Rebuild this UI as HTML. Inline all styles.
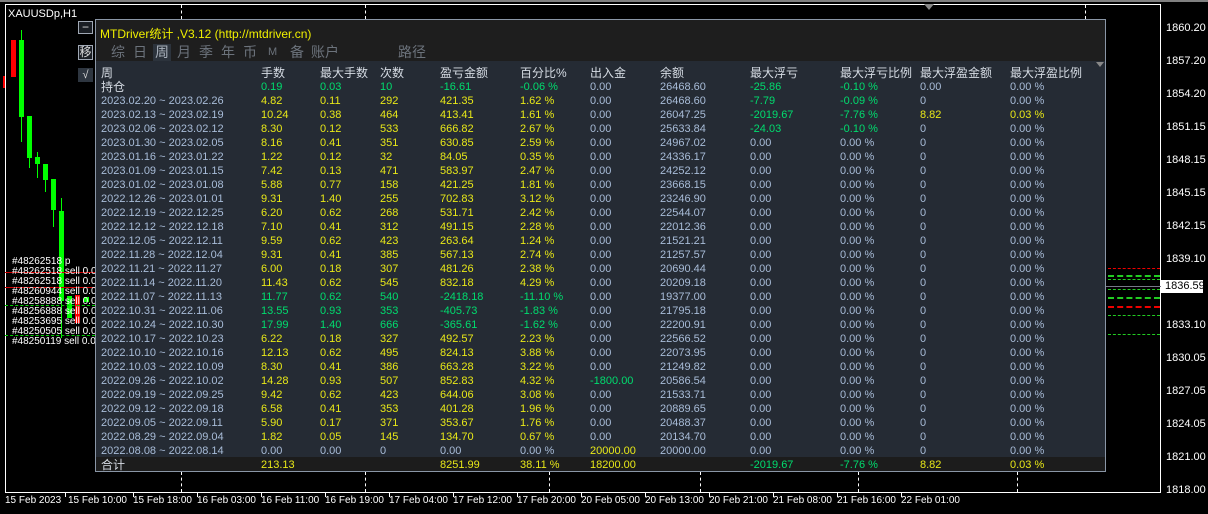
<!DOCTYPE html>
<html><head><meta charset="utf-8"><style>
*{margin:0;padding:0;box-sizing:border-box}
body{width:1208px;height:514px;background:#000;position:relative;overflow:hidden;font-family:"Liberation Sans","Noto Sans CJK SC",sans-serif;font-size:11px;color:#fff}
.a{position:absolute;white-space:nowrap}
.r{position:absolute;left:0;width:1010px;height:14px;line-height:14px;font-size:11px}
.r span{position:absolute;top:0}
.c0{left:5px}.c1{left:165px}.c2{left:224px}.c3{left:284px}.c4{left:344px}.c5{left:424px}.c6{left:494px}.c7{left:564px}.c8{left:654px}.c9{left:744px}.c10{left:824px}.c11{left:914px}
.g{color:#a8bcd8}.y{color:#e8e818}.gr{color:#00dc6e}
#panel{position:absolute;left:95px;top:19px;width:1011px;height:453px;border:1px solid #8a96a6;background:#252b34}
.px{font-size:11px;color:#fff;position:absolute;left:1166px}
.tx{font-size:10px;color:#fff;position:absolute;top:495px}
.tk{position:absolute;top:492px;width:1px;height:5px;background:#fff}
.tab{position:absolute;top:24px;font-size:14px;color:#6c737c;line-height:17px}
.hd{color:#d6dce4;font-size:12px}
</style></head><body>
<div class="a" style="left:0;top:0;width:1208px;height:2px;background:#808080"></div>
<div class="a" style="left:5px;top:4px;width:1156px;height:1px;background:#fff"></div>
<div class="a" style="left:5px;top:4px;width:1px;height:489px;background:#fff"></div>
<div class="a" style="left:1160px;top:4px;width:1px;height:489px;background:#fff"></div>
<div class="a" style="left:5px;top:492px;width:1156px;height:1px;background:#fff"></div>
<div class="a" style="left:181px;top:5px;height:14px;border-left:1px dashed #fff"></div>
<div class="a" style="left:365px;top:5px;height:14px;border-left:1px dashed #fff"></div>
<div class="a" style="left:1085px;top:5px;height:14px;border-left:1px dashed #fff"></div>
<div class="a" style="left:181px;top:472px;height:20px;border-left:1px dashed #fff"></div>
<div class="a" style="left:365px;top:472px;height:20px;border-left:1px dashed #fff"></div>
<div class="a" style="left:549px;top:472px;height:20px;border-left:1px dashed #fff"></div>
<div class="a" style="left:700px;top:472px;height:20px;border-left:1px dashed #fff"></div>
<div class="a" style="left:858px;top:472px;height:20px;border-left:1px dashed #fff"></div>
<div class="a" style="left:1017px;top:472px;height:20px;border-left:1px dashed #fff"></div>
<div class="a" style="left:924px;top:4px;width:0;height:0;border-left:5px solid transparent;border-right:5px solid transparent;border-top:6px solid #888"></div>
<div class="a" style="left:8px;top:8px;font-size:11px">XAUUSDp,H1</div>
<div class="a" style="left:3px;top:76px;width:2px;height:12px;background:#f00"></div>
<div class="a" style="left:11px;top:40px;width:5px;height:37px;background:#f00"></div>
<div class="a" style="left:21px;top:30px;width:1px;height:112px;background:#0f0"></div>
<div class="a" style="left:19px;top:40px;width:5px;height:77px;background:#0f0"></div>
<div class="a" style="left:27px;top:116px;width:5px;height:42px;background:#0f0"></div>
<div class="a" style="left:29px;top:158px;width:1px;height:10px;background:#0f0"></div>
<div class="a" style="left:35px;top:157px;width:5px;height:7px;background:#0f0"></div>
<div class="a" style="left:37px;top:152px;width:1px;height:26px;background:#0f0"></div>
<div class="a" style="left:43px;top:164px;width:5px;height:16px;background:#0f0"></div>
<div class="a" style="left:45px;top:180px;width:1px;height:12px;background:#0f0"></div>
<div class="a" style="left:51px;top:179px;width:5px;height:31px;background:#0f0"></div>
<div class="a" style="left:53px;top:210px;width:1px;height:17px;background:#0f0"></div>
<div class="a" style="left:59px;top:211px;width:5px;height:90px;background:#0f0"></div>
<div class="a" style="left:61px;top:198px;width:1px;height:140px;background:#0f0"></div>
<div class="a" style="left:67px;top:296px;width:5px;height:22px;background:#0f0"></div>
<div class="a" style="left:75px;top:295px;width:5px;height:28px;background:#f00"></div>
<div class="a" style="left:84px;top:297px;width:5px;height:5px;background:#0f0"></div>
<div class="a" style="left:5px;top:305px;width:90px;border-top:1px dashed #0c0"></div>
<div class="a" style="left:5px;top:335px;width:90px;border-top:1px dashed #0c0"></div>
<div class="a" style="left:5px;top:272px;width:90px;height:1px;background:#c00"></div>
<div class="a" style="left:5px;top:287px;width:90px;height:1px;background:#c00"></div>
<div class="a" style="left:12px;top:257px;font-size:10px;line-height:10px">#48262518 p<br>#48262518 sell 0.0<br>#48262518 sell 0.0<br>#48260944 sell 0.02<br>#48258888 sell 0.0<br>#48256888 sell 0.01<br>#48253695 sell 0.01<br>#48250505 sell 0.01<br>#48250119 sell 0.01</div>
<div class="a" style="left:1108px;top:268px;width:52px;border-top:1px dashed #e00"></div>
<div class="a" style="left:1108px;top:275px;width:52px;border-top:2px dashed #2c2"></div>
<div class="a" style="left:1108px;top:279px;width:52px;border-top:1px dashed #2c2"></div>
<div class="a" style="left:1106px;top:286px;width:55px;height:1px;background:#778"></div>
<div class="a" style="left:1108px;top:289px;width:52px;border-top:1px dashed #2c2"></div>
<div class="a" style="left:1108px;top:297px;width:52px;border-top:2px dashed #2c2"></div>
<div class="a" style="left:1108px;top:306px;width:52px;border-top:2px dashed #e00"></div>
<div class="a" style="left:1108px;top:315px;width:52px;border-top:1px dashed #2c2"></div>
<div class="a" style="left:1108px;top:334px;width:52px;border-top:1px dashed #2c2"></div>
<div class="px" style="top:22px">1860.20</div><div class="px" style="top:55px">1857.20</div><div class="px" style="top:88px">1854.20</div><div class="px" style="top:121px">1851.15</div><div class="px" style="top:154px">1848.15</div><div class="px" style="top:187px">1845.15</div><div class="px" style="top:220px">1842.15</div><div class="px" style="top:253px">1839.10</div><div class="px" style="top:319px">1833.10</div><div class="px" style="top:352px">1830.05</div><div class="px" style="top:385px">1827.05</div><div class="px" style="top:418px">1824.05</div><div class="px" style="top:451px">1821.00</div><div class="px" style="top:484px">1818.00</div>
<div class="a" style="left:1161px;top:280px;width:42px;height:13px;background:#fff;color:#000;font-size:11px;line-height:13px;padding-left:4px">1836.59</div>
<div class="tx" style="left:5px">15 Feb 2023</div><div class="tx" style="left:68px">15 Feb 10:00</div><div class="tx" style="left:133px">15 Feb 18:00</div><div class="tx" style="left:197px">16 Feb 03:00</div><div class="tx" style="left:261px">16 Feb 11:00</div><div class="tx" style="left:325px">16 Feb 19:00</div><div class="tx" style="left:389px">17 Feb 04:00</div><div class="tx" style="left:453px">17 Feb 12:00</div><div class="tx" style="left:517px">17 Feb 20:00</div><div class="tx" style="left:581px">20 Feb 05:00</div><div class="tx" style="left:645px">20 Feb 13:00</div><div class="tx" style="left:709px">20 Feb 21:00</div><div class="tx" style="left:773px">21 Feb 08:00</div><div class="tx" style="left:837px">21 Feb 16:00</div><div class="tx" style="left:901px">22 Feb 01:00</div>
<div class="tk" style="left:65px"></div><div class="tk" style="left:133px"></div><div class="tk" style="left:197px"></div><div class="tk" style="left:261px"></div><div class="tk" style="left:325px"></div><div class="tk" style="left:389px"></div><div class="tk" style="left:453px"></div><div class="tk" style="left:517px"></div><div class="tk" style="left:581px"></div><div class="tk" style="left:645px"></div><div class="tk" style="left:709px"></div><div class="tk" style="left:773px"></div><div class="tk" style="left:837px"></div><div class="tk" style="left:901px"></div>
<div class="a" style="left:78px;top:21px;width:15px;height:13px;border:1px solid #a0a8b4;background:#1a1e24;color:#ddd;font-size:12px;line-height:10px;text-align:center">−</div>
<div class="a" style="left:78px;top:45px;width:15px;height:15px;border:1px solid #a0a8b4;background:#1a1e24;color:#ddd;font-size:12px;line-height:13px;text-align:center">移</div>
<div class="a" style="left:78px;top:68px;width:15px;height:14px;background:#2e3640;color:#ddd;font-size:11px;line-height:14px;text-align:center">√</div>
<div id="panel">
<div class="a" style="left:0;top:0;width:1009px;height:41px;background:#1e1e1e"></div>
<div class="a" style="left:4px;top:5px;color:#f0f000;font-size:12px">MTDriver统计 ,V3.12 (http://mtdriver.cn)</div>
<div class="a" style="left:57px;top:24px;width:18px;height:17px;background:#2c333c"></div>
<div class="tab" style="left:15px">综</div><div class="tab" style="left:37px">日</div><div class="tab" style="left:59px;color:#a8b0ba">周</div><div class="tab" style="left:81px">月</div><div class="tab" style="left:103px">季</div><div class="tab" style="left:125px">年</div><div class="tab" style="left:147px">币</div><div class="tab" style="left:172px;font-size:11px">M</div><div class="tab" style="left:194px">备</div><div class="tab" style="left:215px">账户</div><div class="tab" style="left:302px">路径</div>
<div class="a" style="left:1000px;top:42px;width:0;height:0;border-left:4px solid transparent;border-right:4px solid transparent;border-top:5px solid #888"></div>
<div class="a" style="left:0;top:437px;width:1009px;height:14px;background:#1c1c1c"></div>
<div style="position:absolute;left:0;top:0">
<div class="r hd" style="top:46px"><span class="c0">周</span><span class="c1">手数</span><span class="c2">最大手数</span><span class="c3">次数</span><span class="c4">盈亏金额</span><span class="c5">百分比%</span><span class="c6">出入金</span><span class="c7">余额</span><span class="c8">最大浮亏</span><span class="c9">最大浮亏比例</span><span class="c10">最大浮盈金额</span><span class="c11">最大浮盈比例</span></div>
<div class="r" style="top:60px"><span class="c0 hd">持仓</span><span class="c1 gr">0.19</span><span class="c2 gr">0.03</span><span class="c3 gr">10</span><span class="c4 gr">-16.61</span><span class="c5 gr">-0.06 %</span><span class="c6 g">0.00</span><span class="c7 g">26468.60</span><span class="c8 gr">-25.86</span><span class="c9 gr">-0.10 %</span><span class="c10 g">0.00</span><span class="c11 g">0.00 %</span></div>
<div class="r" style="top:74px"><span class="c0 g">2023.02.20 ~ 2023.02.26</span><span class="c1 y">4.82</span><span class="c2 y">0.11</span><span class="c3 y">292</span><span class="c4 y">421.35</span><span class="c5 y">1.62 %</span><span class="c6 g">0.00</span><span class="c7 g">26468.60</span><span class="c8 gr">-7.79</span><span class="c9 gr">-0.09 %</span><span class="c10 g">0</span><span class="c11 g">0.00 %</span></div>
<div class="r" style="top:88px"><span class="c0 g">2023.02.13 ~ 2023.02.19</span><span class="c1 y">10.24</span><span class="c2 y">0.38</span><span class="c3 y">464</span><span class="c4 y">413.41</span><span class="c5 y">1.61 %</span><span class="c6 g">0.00</span><span class="c7 g">26047.25</span><span class="c8 gr">-2019.67</span><span class="c9 gr">-7.76 %</span><span class="c10 y">8.82</span><span class="c11 y">0.03 %</span></div>
<div class="r" style="top:102px"><span class="c0 g">2023.02.06 ~ 2023.02.12</span><span class="c1 y">8.30</span><span class="c2 y">0.12</span><span class="c3 y">533</span><span class="c4 y">666.82</span><span class="c5 y">2.67 %</span><span class="c6 g">0.00</span><span class="c7 g">25633.84</span><span class="c8 gr">-24.03</span><span class="c9 gr">-0.10 %</span><span class="c10 g">0</span><span class="c11 g">0.00 %</span></div>
<div class="r" style="top:116px"><span class="c0 g">2023.01.30 ~ 2023.02.05</span><span class="c1 y">8.16</span><span class="c2 y">0.41</span><span class="c3 y">351</span><span class="c4 y">630.85</span><span class="c5 y">2.59 %</span><span class="c6 g">0.00</span><span class="c7 g">24967.02</span><span class="c8 g">0.00</span><span class="c9 g">0.00 %</span><span class="c10 g">0</span><span class="c11 g">0.00 %</span></div>
<div class="r" style="top:130px"><span class="c0 g">2023.01.16 ~ 2023.01.22</span><span class="c1 y">1.22</span><span class="c2 y">0.12</span><span class="c3 y">32</span><span class="c4 y">84.05</span><span class="c5 y">0.35 %</span><span class="c6 g">0.00</span><span class="c7 g">24336.17</span><span class="c8 g">0.00</span><span class="c9 g">0.00 %</span><span class="c10 g">0</span><span class="c11 g">0.00 %</span></div>
<div class="r" style="top:144px"><span class="c0 g">2023.01.09 ~ 2023.01.15</span><span class="c1 y">7.42</span><span class="c2 y">0.13</span><span class="c3 y">471</span><span class="c4 y">583.97</span><span class="c5 y">2.47 %</span><span class="c6 g">0.00</span><span class="c7 g">24252.12</span><span class="c8 g">0.00</span><span class="c9 g">0.00 %</span><span class="c10 g">0</span><span class="c11 g">0.00 %</span></div>
<div class="r" style="top:158px"><span class="c0 g">2023.01.02 ~ 2023.01.08</span><span class="c1 y">5.88</span><span class="c2 y">0.77</span><span class="c3 y">158</span><span class="c4 y">421.25</span><span class="c5 y">1.81 %</span><span class="c6 g">0.00</span><span class="c7 g">23668.15</span><span class="c8 g">0.00</span><span class="c9 g">0.00 %</span><span class="c10 g">0</span><span class="c11 g">0.00 %</span></div>
<div class="r" style="top:172px"><span class="c0 g">2022.12.26 ~ 2023.01.01</span><span class="c1 y">9.31</span><span class="c2 y">1.40</span><span class="c3 y">255</span><span class="c4 y">702.83</span><span class="c5 y">3.12 %</span><span class="c6 g">0.00</span><span class="c7 g">23246.90</span><span class="c8 g">0.00</span><span class="c9 g">0.00 %</span><span class="c10 g">0</span><span class="c11 g">0.00 %</span></div>
<div class="r" style="top:186px"><span class="c0 g">2022.12.19 ~ 2022.12.25</span><span class="c1 y">6.20</span><span class="c2 y">0.62</span><span class="c3 y">268</span><span class="c4 y">531.71</span><span class="c5 y">2.42 %</span><span class="c6 g">0.00</span><span class="c7 g">22544.07</span><span class="c8 g">0.00</span><span class="c9 g">0.00 %</span><span class="c10 g">0</span><span class="c11 g">0.00 %</span></div>
<div class="r" style="top:200px"><span class="c0 g">2022.12.12 ~ 2022.12.18</span><span class="c1 y">7.10</span><span class="c2 y">0.41</span><span class="c3 y">312</span><span class="c4 y">491.15</span><span class="c5 y">2.28 %</span><span class="c6 g">0.00</span><span class="c7 g">22012.36</span><span class="c8 g">0.00</span><span class="c9 g">0.00 %</span><span class="c10 g">0</span><span class="c11 g">0.00 %</span></div>
<div class="r" style="top:214px"><span class="c0 g">2022.12.05 ~ 2022.12.11</span><span class="c1 y">9.59</span><span class="c2 y">0.62</span><span class="c3 y">423</span><span class="c4 y">263.64</span><span class="c5 y">1.24 %</span><span class="c6 g">0.00</span><span class="c7 g">21521.21</span><span class="c8 g">0.00</span><span class="c9 g">0.00 %</span><span class="c10 g">0</span><span class="c11 g">0.00 %</span></div>
<div class="r" style="top:228px"><span class="c0 g">2022.11.28 ~ 2022.12.04</span><span class="c1 y">9.31</span><span class="c2 y">0.41</span><span class="c3 y">385</span><span class="c4 y">567.13</span><span class="c5 y">2.74 %</span><span class="c6 g">0.00</span><span class="c7 g">21257.57</span><span class="c8 g">0.00</span><span class="c9 g">0.00 %</span><span class="c10 g">0</span><span class="c11 g">0.00 %</span></div>
<div class="r" style="top:242px"><span class="c0 g">2022.11.21 ~ 2022.11.27</span><span class="c1 y">6.00</span><span class="c2 y">0.18</span><span class="c3 y">307</span><span class="c4 y">481.26</span><span class="c5 y">2.38 %</span><span class="c6 g">0.00</span><span class="c7 g">20690.44</span><span class="c8 g">0.00</span><span class="c9 g">0.00 %</span><span class="c10 g">0</span><span class="c11 g">0.00 %</span></div>
<div class="r" style="top:256px"><span class="c0 g">2022.11.14 ~ 2022.11.20</span><span class="c1 y">11.43</span><span class="c2 y">0.62</span><span class="c3 y">545</span><span class="c4 y">832.18</span><span class="c5 y">4.29 %</span><span class="c6 g">0.00</span><span class="c7 g">20209.18</span><span class="c8 g">0.00</span><span class="c9 g">0.00 %</span><span class="c10 g">0</span><span class="c11 g">0.00 %</span></div>
<div class="r" style="top:270px"><span class="c0 g">2022.11.07 ~ 2022.11.13</span><span class="c1 gr">11.77</span><span class="c2 gr">0.62</span><span class="c3 gr">540</span><span class="c4 gr">-2418.18</span><span class="c5 gr">-11.10 %</span><span class="c6 g">0.00</span><span class="c7 g">19377.00</span><span class="c8 g">0.00</span><span class="c9 g">0.00 %</span><span class="c10 g">0</span><span class="c11 g">0.00 %</span></div>
<div class="r" style="top:284px"><span class="c0 g">2022.10.31 ~ 2022.11.06</span><span class="c1 gr">13.55</span><span class="c2 gr">0.93</span><span class="c3 gr">353</span><span class="c4 gr">-405.73</span><span class="c5 gr">-1.83 %</span><span class="c6 g">0.00</span><span class="c7 g">21795.18</span><span class="c8 g">0.00</span><span class="c9 g">0.00 %</span><span class="c10 g">0</span><span class="c11 g">0.00 %</span></div>
<div class="r" style="top:298px"><span class="c0 g">2022.10.24 ~ 2022.10.30</span><span class="c1 gr">17.99</span><span class="c2 gr">1.40</span><span class="c3 gr">666</span><span class="c4 gr">-365.61</span><span class="c5 gr">-1.62 %</span><span class="c6 g">0.00</span><span class="c7 g">22200.91</span><span class="c8 g">0.00</span><span class="c9 g">0.00 %</span><span class="c10 g">0</span><span class="c11 g">0.00 %</span></div>
<div class="r" style="top:312px"><span class="c0 g">2022.10.17 ~ 2022.10.23</span><span class="c1 y">6.22</span><span class="c2 y">0.18</span><span class="c3 y">327</span><span class="c4 y">492.57</span><span class="c5 y">2.23 %</span><span class="c6 g">0.00</span><span class="c7 g">22566.52</span><span class="c8 g">0.00</span><span class="c9 g">0.00 %</span><span class="c10 g">0</span><span class="c11 g">0.00 %</span></div>
<div class="r" style="top:326px"><span class="c0 g">2022.10.10 ~ 2022.10.16</span><span class="c1 y">12.13</span><span class="c2 y">0.62</span><span class="c3 y">495</span><span class="c4 y">824.13</span><span class="c5 y">3.88 %</span><span class="c6 g">0.00</span><span class="c7 g">22073.95</span><span class="c8 g">0.00</span><span class="c9 g">0.00 %</span><span class="c10 g">0</span><span class="c11 g">0.00 %</span></div>
<div class="r" style="top:340px"><span class="c0 g">2022.10.03 ~ 2022.10.09</span><span class="c1 y">8.30</span><span class="c2 y">0.41</span><span class="c3 y">386</span><span class="c4 y">663.28</span><span class="c5 y">3.22 %</span><span class="c6 g">0.00</span><span class="c7 g">21249.82</span><span class="c8 g">0.00</span><span class="c9 g">0.00 %</span><span class="c10 g">0</span><span class="c11 g">0.00 %</span></div>
<div class="r" style="top:354px"><span class="c0 g">2022.09.26 ~ 2022.10.02</span><span class="c1 y">14.28</span><span class="c2 y">0.93</span><span class="c3 y">507</span><span class="c4 y">852.83</span><span class="c5 y">4.32 %</span><span class="c6 gr">-1800.00</span><span class="c7 g">20586.54</span><span class="c8 g">0.00</span><span class="c9 g">0.00 %</span><span class="c10 g">0</span><span class="c11 g">0.00 %</span></div>
<div class="r" style="top:368px"><span class="c0 g">2022.09.19 ~ 2022.09.25</span><span class="c1 y">9.42</span><span class="c2 y">0.62</span><span class="c3 y">423</span><span class="c4 y">644.06</span><span class="c5 y">3.08 %</span><span class="c6 g">0.00</span><span class="c7 g">21533.71</span><span class="c8 g">0.00</span><span class="c9 g">0.00 %</span><span class="c10 g">0</span><span class="c11 g">0.00 %</span></div>
<div class="r" style="top:382px"><span class="c0 g">2022.09.12 ~ 2022.09.18</span><span class="c1 y">6.58</span><span class="c2 y">0.41</span><span class="c3 y">353</span><span class="c4 y">401.28</span><span class="c5 y">1.96 %</span><span class="c6 g">0.00</span><span class="c7 g">20889.65</span><span class="c8 g">0.00</span><span class="c9 g">0.00 %</span><span class="c10 g">0</span><span class="c11 g">0.00 %</span></div>
<div class="r" style="top:396px"><span class="c0 g">2022.09.05 ~ 2022.09.11</span><span class="c1 y">5.90</span><span class="c2 y">0.17</span><span class="c3 y">371</span><span class="c4 y">353.67</span><span class="c5 y">1.76 %</span><span class="c6 g">0.00</span><span class="c7 g">20488.37</span><span class="c8 g">0.00</span><span class="c9 g">0.00 %</span><span class="c10 g">0</span><span class="c11 g">0.00 %</span></div>
<div class="r" style="top:410px"><span class="c0 g">2022.08.29 ~ 2022.09.04</span><span class="c1 y">1.82</span><span class="c2 y">0.05</span><span class="c3 y">145</span><span class="c4 y">134.70</span><span class="c5 y">0.67 %</span><span class="c6 g">0.00</span><span class="c7 g">20134.70</span><span class="c8 g">0.00</span><span class="c9 g">0.00 %</span><span class="c10 g">0</span><span class="c11 g">0.00 %</span></div>
<div class="r" style="top:424px"><span class="c0 g">2022.08.08 ~ 2022.08.14</span><span class="c1 g">0.00</span><span class="c2 g">0.00</span><span class="c3 g">0</span><span class="c4 g">0.00</span><span class="c5 g">0.00 %</span><span class="c6 y">20000.00</span><span class="c7 g">20000.00</span><span class="c8 g">0.00</span><span class="c9 g">0.00 %</span><span class="c10 g">0</span><span class="c11 g">0.00 %</span></div>
<div class="r" style="top:438px"><span class="c0 hd">合计</span><span class="c1 y">213.13</span><span class="c4 y">8251.99</span><span class="c5 y">38.11 %</span><span class="c6 y">18200.00</span><span class="c8 gr">-2019.67</span><span class="c9 gr">-7.76 %</span><span class="c10 y">8.82</span><span class="c11 y">0.03 %</span></div>
</div>
</div>
</body></html>
